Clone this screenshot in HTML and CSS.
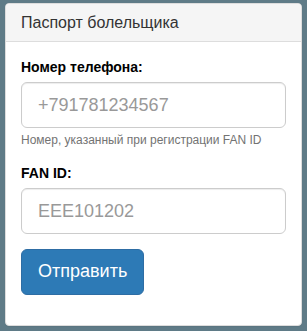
FILE: index.html
```html
<!DOCTYPE html>
<html lang="ru">
<head>
<meta charset="utf-8">
<title>Паспорт болельщика</title>
<link rel="stylesheet" href="styles.css">
</head>
<body>
<div class="panel">
  <div class="panel-heading">Паспорт болельщика</div>
  <form class="panel-body">
    <div class="form-group">
      <label class="label">Номер телефона:</label>
      <input class="input" type="text" placeholder="+791781234567">
      <p class="help">Номер, указанный при регистрации FAN ID</p>
    </div>
    <div class="form-group">
      <label class="label">FAN ID:</label>
      <input class="input" type="text" placeholder="EEE101202">
    </div>
    <button class="btn" type="button">Отправить</button>
  </form>
</div>
</body>
</html>
```
FILE: styles.css
```css
html, body {
  margin: 0;
  padding: 0;
}
body {
  background: #5f7b87;
  padding: 3px 5px 4px 5px;
  font-family: "Liberation Sans", Arial, sans-serif;
  font-size: 14px;
  line-height: 20px;
  color: #333;
}
.panel {
  background: #fff;
  border: 1px solid #ddd;
  border-radius: 4px;
  height: 323px;
  box-sizing: border-box;
  box-shadow: 0 1px 1px rgba(0,0,0,.05);
}
.panel-heading {
  background: #f5f5f5;
  border-bottom: 1px solid #ddd;
  border-radius: 3px 3px 0 0;
  padding: 10px 15px;
  font-size: 16px;
  line-height: 17px;
  color: #333;
}
.panel-body {
  padding: 15px;
  margin: 0;
}
.form-group {
  margin-bottom: 15px;
}
.label {
  display: block;
  font-weight: bold;
  margin-bottom: 5px;
  color: #000;
}
.input {
  display: block;
  width: 100%;
  box-sizing: border-box;
  height: 46px;
  padding: 10px 16px;
  font-family: inherit;
  font-size: 18px;
  line-height: 1.3333;
  color: #555;
  border: 1px solid #ccc;
  border-radius: 6px;
  box-shadow: inset 0 1px 1px rgba(0,0,0,.075);
  background: #fff;
  outline: none;
}
.input::placeholder {
  color: #999;
}
.help {
  margin: 5px 0 10px;
  font-size: 12px;
  line-height: 15px;
  color: #737373;
}
.btn {
  display: inline-block;
  height: 46px;
  padding: 10px 16px;
  font-family: inherit;
  font-size: 18px;
  line-height: 1.3333;
  color: #fff;
  background: #2d7ab6;
  border: 1px solid #2e6da4;
  border-radius: 6px;
  cursor: pointer;
}
```
